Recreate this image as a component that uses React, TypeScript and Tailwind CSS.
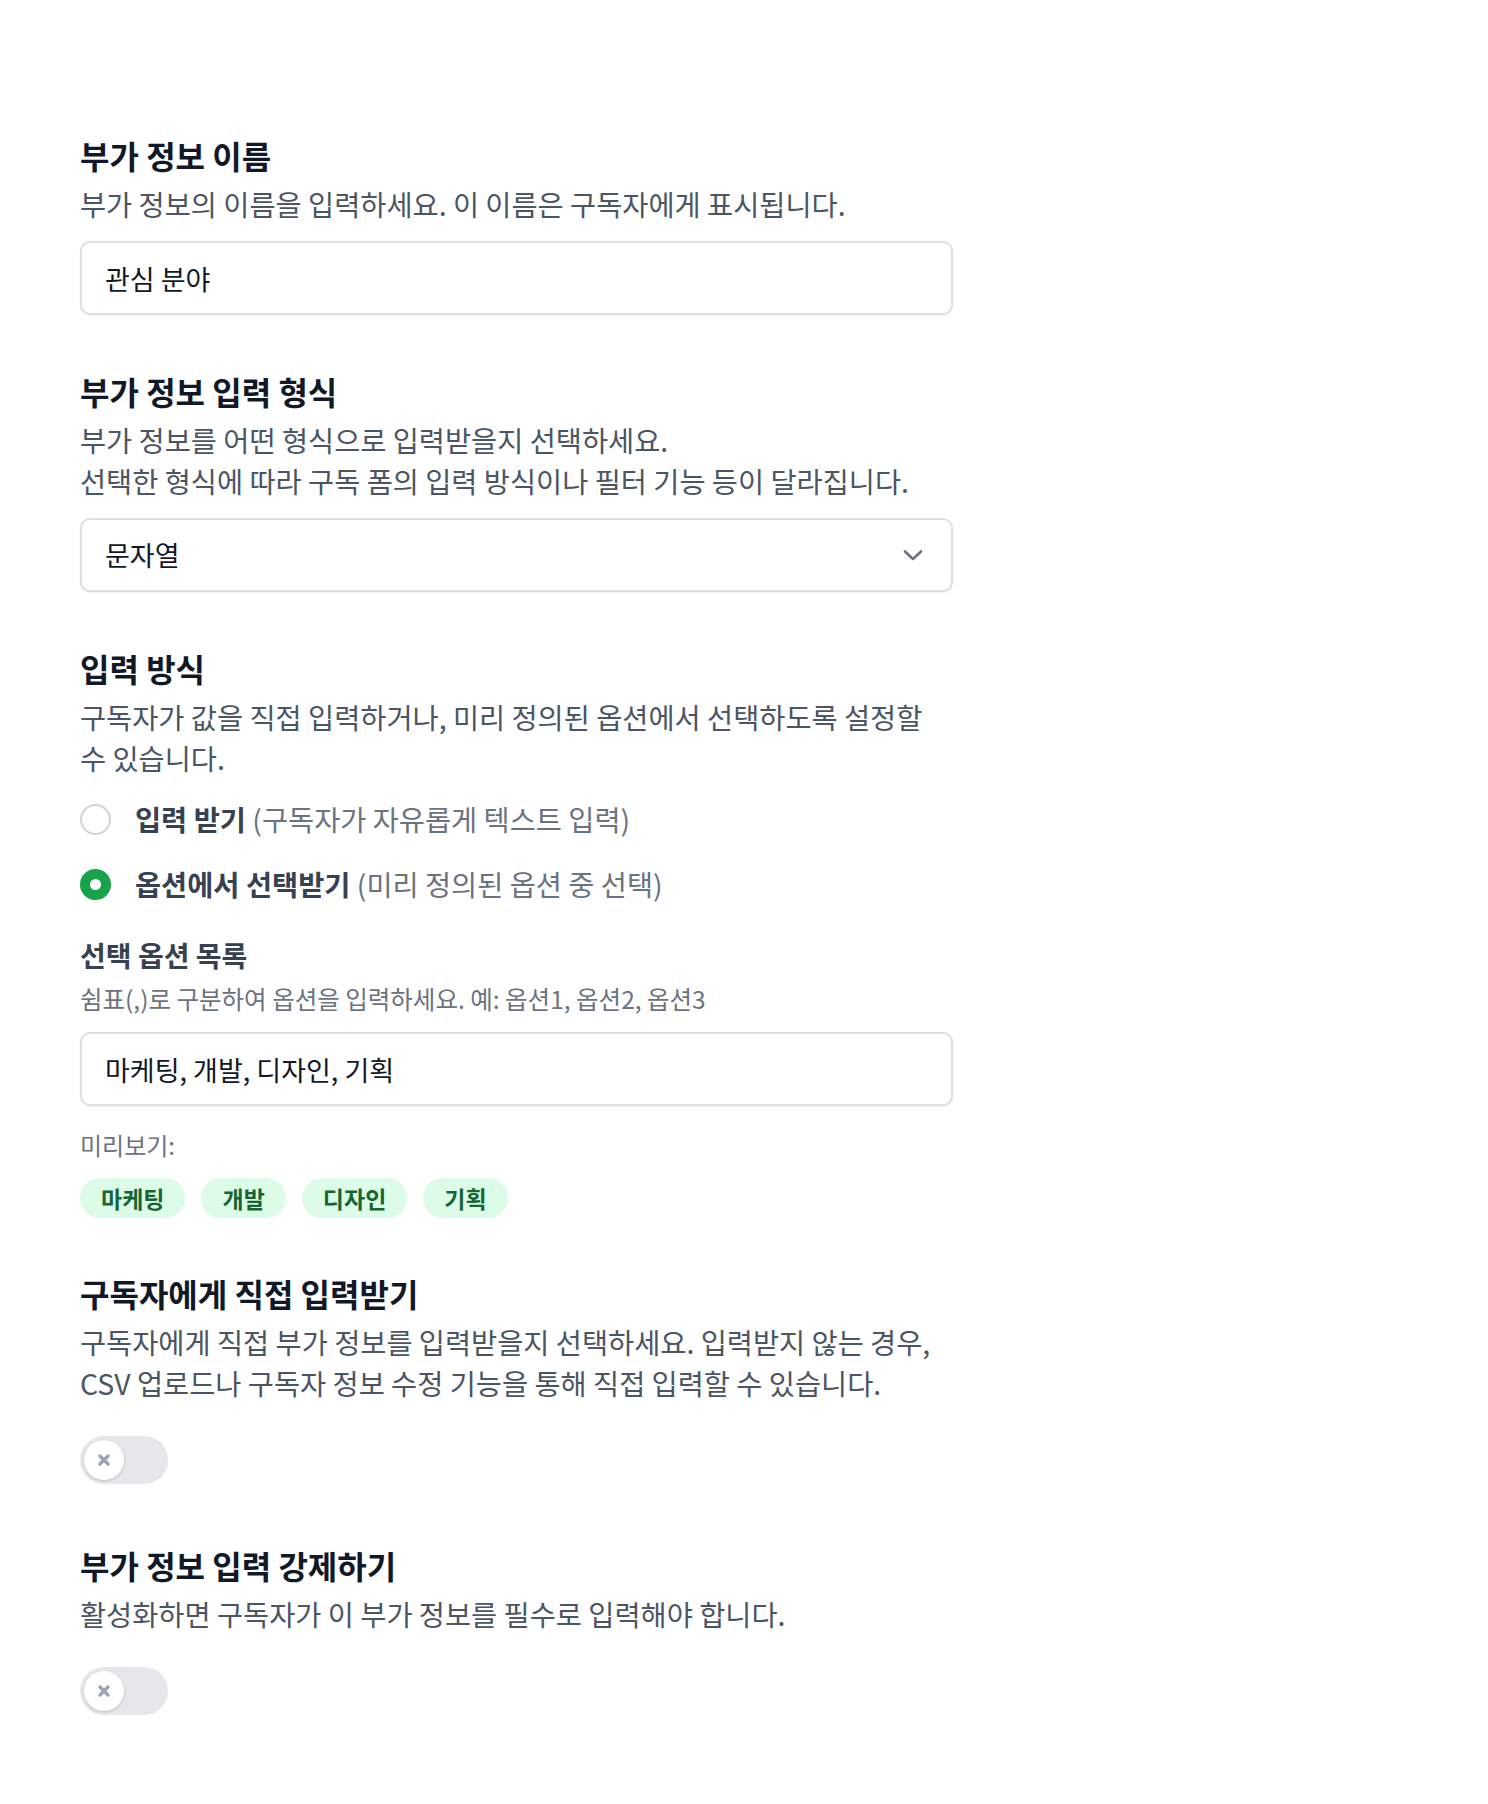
import React, { useState } from "react";

const FONT = { fontFamily: '"Noto Sans CJK KR", "Noto Sans", sans-serif' };

function SectionTitle({ children }: { children: React.ReactNode }) {
  return <h2 className="text-[32px] leading-[40px] font-bold text-[#111827]">{children}</h2>;
}

function Desc({ children }: { children: React.ReactNode }) {
  return <p className="mt-2 max-w-[860px] text-[28.4px] leading-[41px] text-[#4b5563]">{children}</p>;
}

function Toggle({ on, onChange }: { on: boolean; onChange: (v: boolean) => void }) {
  return (
    <button
      type="button"
      onClick={() => onChange(!on)}
      className={`relative flex h-[48px] w-[88px] items-center rounded-full p-[4px] ${on ? "bg-[#16a34a]" : "bg-[#e5e7eb]"}`}
    >
      <span
        className={`flex h-[40px] w-[40px] items-center justify-center rounded-full bg-white shadow-[0_1px_3px_rgba(0,0,0,0.18)] ${on ? "translate-x-[40px]" : ""}`}
      >
        <svg width="14" height="14" viewBox="0 0 14 14" fill="none">
          <path d="M3 3l8 8M11 3l-8 8" stroke="#9ca3af" strokeWidth="3.4" strokeLinecap="round" />
        </svg>
      </span>
    </button>
  );
}

function Radio({ checked }: { checked: boolean }) {
  return checked ? (
    <span className="flex h-[31px] w-[31px] shrink-0 items-center justify-center rounded-full bg-[#16a34a]">
      <span className="h-[11px] w-[11px] rounded-full bg-white" />
    </span>
  ) : (
    <span className="h-[31px] w-[31px] shrink-0 rounded-full border-2 border-[#d1d5db] bg-white" />
  );
}

export default function App() {
  const [name, setName] = useState("관심 분야");
  const [mode, setMode] = useState<"free" | "options">("options");
  const [options, setOptions] = useState("마케팅, 개발, 디자인, 기획");
  const [direct, setDirect] = useState(false);
  const [required, setRequired] = useState(false);

  const chips = options
    .split(",")
    .map((s) => s.trim())
    .filter(Boolean);

  const fieldCls =
    "mt-[17px] h-[74px] w-full rounded-[10px] border-2 border-[#dcdfe4] bg-white px-[23px] text-[27px] text-[#111827] shadow-[0_1px_2px_rgba(0,0,0,0.06)] outline-none";

  return (
    <div style={FONT} className="min-h-[1804px] bg-white">
      <div className="ml-[80px] w-[873px] pt-[135px]">
        {/* 이름 */}
        <section>
          <SectionTitle>부가 정보 이름</SectionTitle>
          <Desc>부가 정보의 이름을 입력하세요. 이 이름은 구독자에게 표시됩니다.</Desc>
          <input className={fieldCls} value={name} onChange={(e) => setName(e.target.value)} />
        </section>

        {/* 입력 형식 */}
        <section className="mt-[56px]">
          <SectionTitle>부가 정보 입력 형식</SectionTitle>
          <Desc>
            부가 정보를 어떤 형식으로 입력받을지 선택하세요.
            <br />
            선택한 형식에 따라 구독 폼의 입력 방식이나 필터 기능 등이 달라집니다.
          </Desc>
          <div className={`${fieldCls} flex items-center justify-between`}>
            <span>문자열</span>
            <svg width="22" height="14" viewBox="0 0 22 14" fill="none" className="mr-[4px]">
              <path d="M3 3.5l8 7.5 8-7.5" stroke="#6b7280" strokeWidth="2.6" strokeLinecap="round" strokeLinejoin="round" />
            </svg>
          </div>
        </section>

        {/* 입력 방식 */}
        <section className="mt-[56px]">
          <SectionTitle>입력 방식</SectionTitle>
          <Desc>구독자가 값을 직접 입력하거나, 미리 정의된 옵션에서 선택하도록 설정할 수 있습니다.</Desc>
          <div className="mt-[21px] flex flex-col gap-[25px]">
            <label className="flex h-[40px] cursor-pointer items-center gap-[24px]" onClick={() => setMode("free")}>
              <Radio checked={mode === "free"} />
              <span className="text-[28.4px] leading-[40px]">
                <span className="font-bold text-[#374151]">입력 받기</span>{" "}
                <span className="text-[#6b7280]">(구독자가 자유롭게 텍스트 입력)</span>
              </span>
            </label>
            <label className="flex h-[40px] cursor-pointer items-center gap-[24px]" onClick={() => setMode("options")}>
              <Radio checked={mode === "options"} />
              <span className="text-[28.4px] leading-[40px]">
                <span className="font-bold text-[#374151]">옵션에서 선택받기</span>{" "}
                <span className="text-[#6b7280]">(미리 정의된 옵션 중 선택)</span>
              </span>
            </label>
          </div>

          <div className="mt-[33px]">
            <h3 className="text-[28px] leading-[36px] font-semibold text-[#374151]">선택 옵션 목록</h3>
            <p className="mt-[10px] text-[24.5px] leading-[32px] text-[#6b7280]">
              쉼표(,)로 구분하여 옵션을 입력하세요. 예: 옵션1, 옵션2, 옵션3
            </p>
            <input className={fieldCls} value={options} onChange={(e) => setOptions(e.target.value)} />
            <p className="mt-[23px] text-[24px] leading-[32px] text-[#6b7280]">미리보기:</p>
            <div className="mt-[17px] flex flex-wrap gap-[16px]">
              {chips.map((c) => (
                <span
                  key={c}
                  className="flex h-[40px] items-center rounded-full bg-[#dcfce7] px-[21px] text-[23px] font-semibold text-[#166534]"
                >
                  {c}
                </span>
              ))}
            </div>
          </div>
        </section>

        {/* 직접 입력 */}
        <section className="mt-[55px]">
          <SectionTitle>구독자에게 직접 입력받기</SectionTitle>
          <Desc>
            구독자에게 직접 부가 정보를 입력받을지 선택하세요. 입력받지 않는 경우, CSV 업로드나 구독자 정보 수정 기능을 통해
            직접 입력할 수 있습니다.
          </Desc>
          <div className="mt-[33px]">
            <Toggle on={direct} onChange={setDirect} />
          </div>
        </section>

        {/* 필수 입력 */}
        <section className="mt-[61px]">
          <SectionTitle>부가 정보 입력 강제하기</SectionTitle>
          <Desc>활성화하면 구독자가 이 부가 정보를 필수로 입력해야 합니다.</Desc>
          <div className="mt-[33px]">
            <Toggle on={required} onChange={setRequired} />
          </div>
        </section>
      </div>
    </div>
  );
}
